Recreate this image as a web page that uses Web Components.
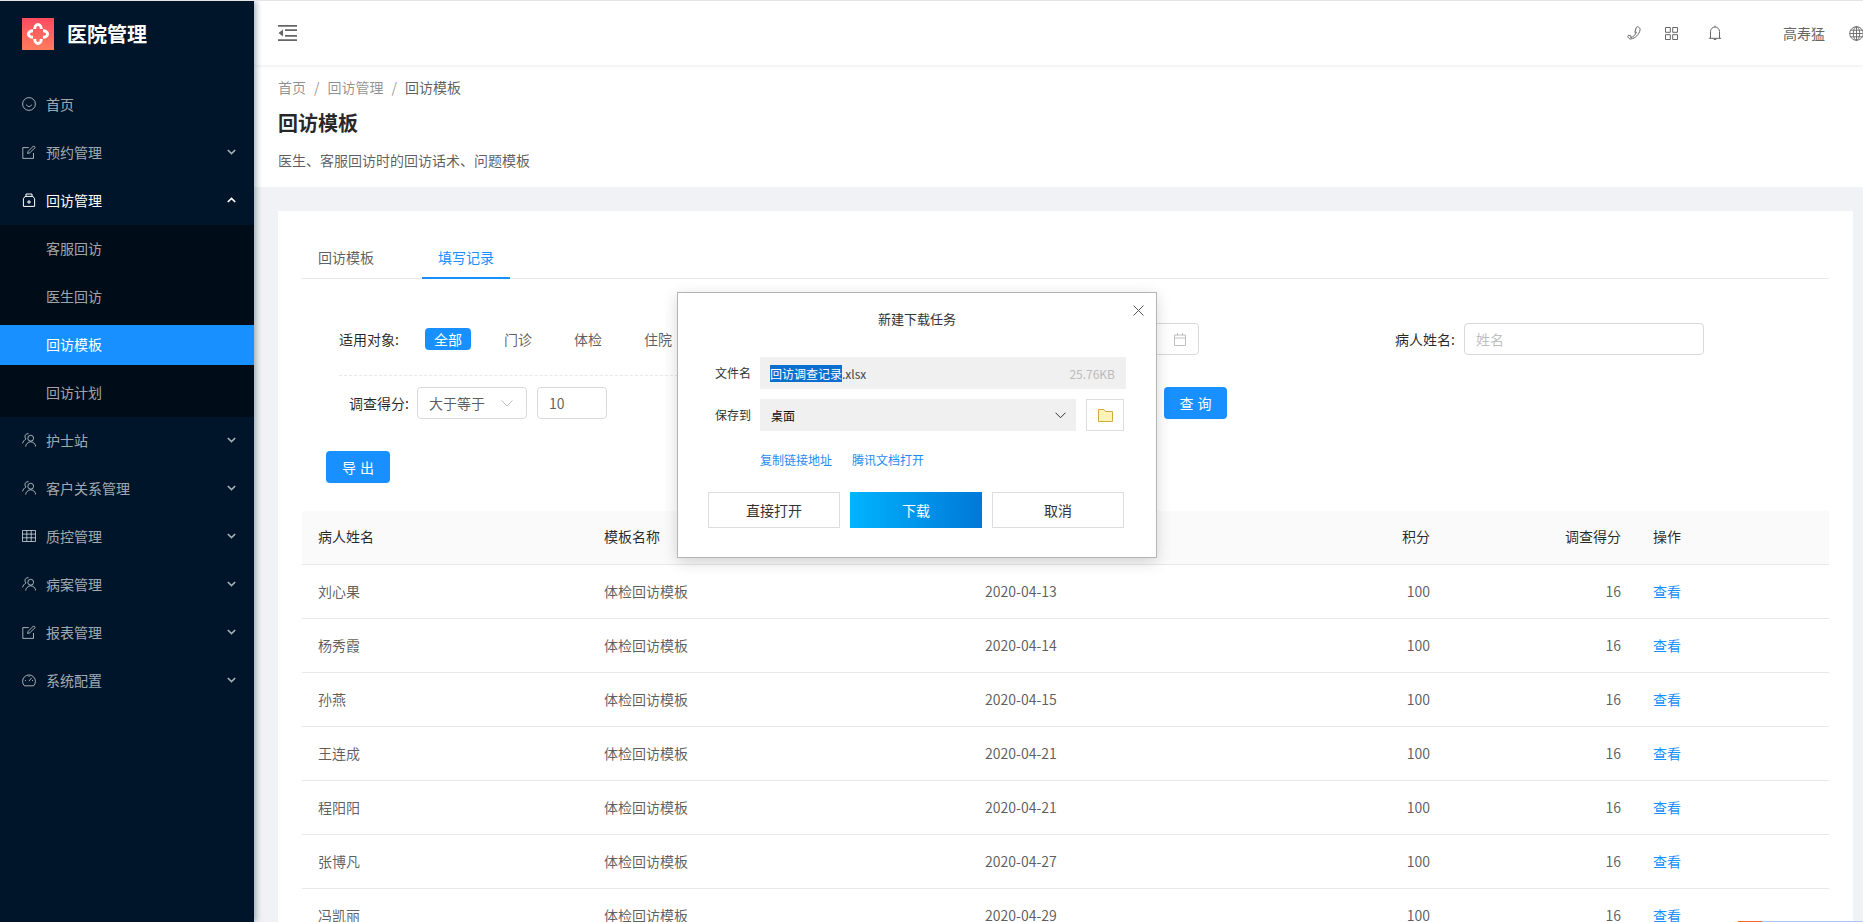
<!DOCTYPE html>
<html lang="zh-CN">
<head>
<meta charset="utf-8">
<title>回访模板</title>
<style>
  html, body { margin: 0; height: 100%; overflow: hidden; background: #f0f2f5; }
  body { font-family: "Noto Sans CJK SC", sans-serif; font-size: 14px; }
</style>
</head>
<body>
<app-shell>
  <side-nav slot="nav"></side-nav>
  <top-bar slot="top"></top-bar>
  <page-head slot="head" current="回访模板" desc="医生、客服回访时的回访话术、问题模板"></page-head>
  <record-panel slot="body"></record-panel>
</app-shell>
<download-dialog></download-dialog>
<task-strip></task-strip>

<script>
const icons = {
    smile: '<circle cx="7" cy="7" r="6.4"/><path d="M4.4 7.6c.6 1.4 1.5 2 2.6 2s2-.6 2.6-2"/>',
    form: '<path d="M11.5 8v5.4H.8V2.6h6"/><path d="M5.6 8.4l.5-2L11.6.9l1.6 1.6-5.5 5.4z"/>',
    medicine: '<path d="M3 3.4h8l1.6 2.4v7.6H1.4V5.8z"/><path d="M4 3.4V1h6v2.4"/><path d="M7 7v4M5 9h4"/>',
    team: '<circle cx="8.7" cy="5.2" r="2.9"/><path d="M3.6 13.6C4 11 6 8.8 8.7 8.8s4.700 2.200 5.100 4.800"/><path d="M6.600.7A3 3 0 0 0 4 5.900C2.400 6.900 1.200 8.400.5 10.400"/>',
    table: '<path d="M.5 1.500h13v11H.5zM.5 5.100h13M.5 8.800h13M4.800 1.500v11M9.200 1.500v11"/>',
    gauge: '<path d="M2.400 12.800a6.400 6.400 0 1 1 9.200 0z"/><path d="M7 8.200l2.600-3.400M3 7.600h1M10 7.600h1M7 3v1"/>',
};

function icon(name, size) {
    return `<svg width="${size}" height="${size}" viewBox="0 0 14 14" fill="none" stroke="currentColor" stroke-width="1">${icons[name]}</svg>`;
}

const shellTemplate = document.createElement('template');
shellTemplate.innerHTML = `
    <style>
        :host { display: flex; width: 1863px; height: 922px; overflow: hidden; box-sizing: border-box; border-top: 1px solid #e4e4e4; }
        .nav { flex: 0 0 254px; position: relative; z-index: 2; box-shadow: 2px 0 6px rgba(0, 21, 41, .35); }
        .main { flex: 1; min-width: 0; display: flex; flex-flow: column nowrap; }
    </style>
    <div class="nav"><slot name="nav"></slot></div>
    <div class="main">
        <slot name="top"></slot>
        <slot name="head"></slot>
        <slot name="body"></slot>
    </div>
`;

class AppShell extends HTMLElement {
    constructor() {
        super();
        this.attachShadow({ mode: 'open' }).appendChild(shellTemplate.content.cloneNode(true));
    }
}

const navTemplate = document.createElement('template');
navTemplate.innerHTML = `
    <style>
        :host { display: block; height: 100%; background: #001529; color: rgba(255, 255, 255, .65); font-size: 14px; }
        .brand { display: flex; align-items: center; height: 65px; padding-left: 22px; box-sizing: border-box; }
        .brand span { margin-left: 13px; color: #fff; font-size: 20px; font-weight: 700; line-height: 28px; }
        .list { padding-top: 15px; }
        .sub { background: #000c17; }
    </style>
    <div class="brand">
        <svg width="32" height="32" viewBox="0 0 32 32">
            <defs><linearGradient id="lg" x1="0" y1="0" x2="0" y2="1"><stop offset="0" stop-color="#ff4a62"/><stop offset="1" stop-color="#ff7d5c"/></linearGradient></defs>
            <rect width="32" height="32" fill="url(#lg)"/>
            <g fill="none" stroke="#fff" stroke-width="3">
                <path id="petal" d="M12.700 11C12.700 8.500 14.200 6.500 16 6.500s3.300 2 3.300 4.500"/>
                <use href="#petal" transform="rotate(90 16 16)"/>
                <use href="#petal" transform="rotate(180 16 16)"/>
                <use href="#petal" transform="rotate(270 16 16)"/>
            </g>
        </svg>
        <span>医院管理</span>
    </div>
    <div class="list"></div>
`;

const menu = [
    { text: '首页', icon: 'smile' },
    { text: '预约管理', icon: 'form', arrow: 'down' },
    { text: '回访管理', icon: 'medicine', arrow: 'up', open: true, children: ['客服回访', '医生回访', '回访模板', '回访计划'] },
    { text: '护士站', icon: 'team', arrow: 'down' },
    { text: '客户关系管理', icon: 'team', arrow: 'down' },
    { text: '质控管理', icon: 'table', arrow: 'down' },
    { text: '病案管理', icon: 'team', arrow: 'down' },
    { text: '报表管理', icon: 'form', arrow: 'down' },
    { text: '系统配置', icon: 'gauge', arrow: 'down' },
];

class SideNav extends HTMLElement {
    constructor() {
        super();
        this._shadowRoot = this.attachShadow({ mode: 'open' });
        this._shadowRoot.appendChild(navTemplate.content.cloneNode(true));
        this.$list = this._shadowRoot.querySelector('.list');
        menu.forEach((entry) => {
            const row = document.createElement('nav-row');
            row.setAttribute('text', entry.text);
            row.setAttribute('icon', entry.icon);
            if (entry.arrow) row.setAttribute('arrow', entry.arrow);
            if (entry.open) row.setAttribute('open', '');
            this.$list.appendChild(row);
            if (entry.children) {
                const sub = document.createElement('div');
                sub.className = 'sub';
                entry.children.forEach((text) => {
                    const child = document.createElement('nav-row');
                    child.setAttribute('text', text);
                    if (text === '回访模板') child.setAttribute('selected', '');
                    sub.appendChild(child);
                });
                this.$list.appendChild(sub);
            }
        });
    }
}

class NavRow extends HTMLElement {
    constructor() {
        super();
        this.attachShadow({ mode: 'open' });
    }

    connectedCallback() {
        const name = this.getAttribute('icon');
        const arrow = this.getAttribute('arrow');
        const rotate = arrow === 'up' ? 'transform:rotate(180deg);' : '';
        this.shadowRoot.innerHTML = `
            <style>
                :host { display: block; height: 48px; padding: 4px 0; box-sizing: border-box; }
                .row { display: flex; align-items: center; height: 40px; box-sizing: border-box; padding: 0 0 2px 22px; line-height: 22px; }
                .ico { flex: 0 0 24px; display: flex; }
                .txt { margin-left: ${name ? 0 : 24}px; }
                .arrow { margin-left: auto; margin-right: 18px; display: flex; }
                :host([open]) .row { color: #fff; }
                :host([selected]) .row { background: #1890ff; color: #fff; }
            </style>
            <div class="row">
                ${name ? `<span class="ico">${icon(name, 14)}</span>` : ''}
                <span class="txt">${this.getAttribute('text')}</span>
                ${arrow ? `<svg class="arrow" style="${rotate}" width="9" height="6" viewBox="0 0 9 6" fill="none" stroke="currentColor" stroke-width="1.700"><path d="M.8 1l3.700 3.500L8.200 1"/></svg>` : ''}
            </div>
        `;
    }
}

const topTemplate = document.createElement('template');
topTemplate.innerHTML = `
    <style>
        :host { display: flex; flex: 0 0 64px; align-items: center; background: #fff; color: #666; position: relative; z-index: 1; box-shadow: 0 1px 4px rgba(0, 21, 41, .08); font-size: 14px; }
        .fold { margin-left: 24px; display: flex; }
        .tools { margin-left: auto; display: flex; align-items: center; width: 236px; box-sizing: border-box; }
        .tools svg { display: block; flex: none; }
        .name { margin-left: 61px; line-height: 22px; white-space: nowrap; }
        .globe { margin-left: 24px; }
    </style>
    <svg class="fold" width="19" height="16" viewBox="0 0 19 16" fill="#666">
        <path d="M0 0h19v1.800H0zM0 14.200h19V16H0zM7 4.300h12v1.800H7zM7 9.900h12v1.800H7zM.5 8L5 4.500v7z"/>
    </svg>
    <div class="tools">
        <svg width="14" height="14" viewBox="0 0 14 14" fill="none" stroke="currentColor"><path d="M9.300 1.300l1.300-.6c1.700.6 2.700 1.700 2.500 3.100-.9 4.600-4.600 8.400-9.200 9.200-1.400.2-2.500-.8-3.100-2.500l.7-1.300 2.500.9-.3 1.600c2.500-.6 4.900-3 5.600-5.700l-1.500.3z"/></svg>
        <svg style="margin-left:24px" width="13" height="13" viewBox="0 0 13 13" fill="none" stroke="currentColor"><path d="M.5.500h4.800v4.800H.5zM7.700.500h4.800v4.800H7.700zM.5 7.700h4.800v4.800H.5zM7.700 7.700h4.800v4.800H7.700z"/></svg>
        <svg style="margin-left:30px" width="14" height="16" viewBox="0 0 14 16" fill="none" stroke="currentColor"><path d="M7 .5v1.300M2.500 13V6.500a4.500 4.500 0 0 1 9 0V13M.8 13.300h12.400M5.400 13.600c.2 1.400 3 1.400 3.200 0"/></svg>
        <span class="name">高寿猛</span>
        <svg class="globe" width="15" height="15" viewBox="0 0 15 15" fill="none" stroke="currentColor" stroke-width=".9" style="margin-right:-20px"><circle cx="7.500" cy="7.500" r="6.800"/><ellipse cx="7.500" cy="7.500" rx="3.200" ry="6.800"/><path d="M.7 7.500h13.600M1.500 4.200h12M1.500 10.800h12M7.500.7v13.600"/></svg>
    </div>
`;

class TopBar extends HTMLElement {
    constructor() {
        super();
        this.attachShadow({ mode: 'open' }).appendChild(topTemplate.content.cloneNode(true));
    }
}

class PageHead extends HTMLElement {
    constructor() {
        super();
        this.attachShadow({ mode: 'open' });
    }

    connectedCallback() {
        const current = this.getAttribute('current');
        this.shadowRoot.innerHTML = `
            <style>
                :host { display: block; flex: 0 0 122px; box-sizing: border-box; padding: 11px 24px 0; background: #fff; }
                .crumb { height: 22px; line-height: 22px; color: rgba(0, 0, 0, .45); font-size: 14px; }
                .crumb i { font-style: normal; padding: 0 8px; }
                .crumb b { font-weight: 400; color: rgba(0, 0, 0, .65); }
                h1 { margin: 11px 0 0; font-size: 20px; line-height: 28px; font-weight: 600; color: rgba(0, 0, 0, .85); }
                p { margin: 12px 0 0; font-size: 14px; line-height: 22px; color: rgba(0, 0, 0, .65); }
            </style>
            <div class="crumb">首页<i>/</i>回访管理<i>/</i><b>${current}</b></div>
            <h1>${current}</h1>
            <p>${this.getAttribute('desc')}</p>
        `;
    }
}

const panelTemplate = document.createElement('template');
panelTemplate.innerHTML = `
    <style>
        :host { display: block; margin: 24px 10px 0 24px; padding: 24px 24px 0; background: #fff; color: rgba(0, 0, 0, .65); font-size: 14px; flex: 1; min-height: 0; }
        .tabs { display: flex; height: 43px; border-bottom: 1px solid #e8e8e8; box-sizing: content-box; }
        .tab { padding: 11px 16px 0; line-height: 22px; box-sizing: border-box; width: 88px; margin-right: 32px; height: 45px; }
        .tab.on { color: #1890ff; border-bottom: 2px solid #1890ff; height: 44px; margin-right: 0; }
        .line-one { display: flex; align-items: center; height: 32px; margin-top: 44px; padding-left: 37px; }
        .label { width: 61px; flex: none; color: rgba(0, 0, 0, .85); line-height: 22px; white-space: nowrap; }
        .tag { display: inline-block; width: 46px; height: 22px; line-height: 22px; margin-left: 25px; border-radius: 4px; background: #1890ff; color: #fff; text-align: center; }
        .plain { margin-left: 33px; width: 37px; }
        .box { display: flex; align-items: center; box-sizing: border-box; height: 32px; border: 1px solid #d9d9d9; border-radius: 4px; padding: 0 11px; }
        .range { margin-left: auto; width: 300px; justify-content: flex-end; padding-right: 12px; }
        .name-label { margin-left: 196px; }
        .name-box { width: 240px; margin-left: 8px; margin-right: 125px; color: #bfbfbf; }
        .dash { width: 700px; height: 0; border-top: 1px dashed #e8e8e8; margin: 20px 0 11px 37px; }
        .line-two { display: flex; align-items: center; height: 32px; padding-left: 47px; }
        .select { width: 110px; margin-left: 7px; justify-content: space-between; padding-right: 13px; }
        .num { width: 70px; margin-left: 10px; }
        .primary { display: flex; align-items: center; justify-content: center; height: 32px; border-radius: 4px; background: #1890ff; color: #fff; box-shadow: 0 2px 0 rgba(0, 0, 0, .015); letter-spacing: 4px; }
        .query { width: 63px; margin-left: 557px; padding-left: 4px; box-sizing: border-box; }
        .export { width: 64px; margin: 32px 0 28px 24px; padding-left: 4px; box-sizing: border-box; }
    </style>
    <div class="tabs">
        <div class="tab">回访模板</div>
        <div class="tab on">填写记录</div>
    </div>
    <div class="line-one">
        <span class="label">适用对象:</span>
        <span class="tag">全部</span>
        <span class="plain">门诊</span>
        <span class="plain">体检</span>
        <span class="plain">住院</span>
        <span class="box range">
            <svg width="12" height="13" viewBox="0 0 12 13" fill="none" stroke="#bfbfbf"><path d="M.5 2h11v10.500H.5zM.5 5h11M3.500 0v2.500M8.500 0v2.500"/></svg>
        </span>
        <span class="label name-label">病人姓名:</span>
        <span class="box name-box">姓名</span>
    </div>
    <div class="dash"></div>
    <div class="line-two">
        <span class="label">调查得分:</span>
        <span class="box select">大于等于
            <svg width="12" height="7" viewBox="0 0 12 7" fill="none" stroke="#bfbfbf"><path d="M.5.500L6 6l5.500-5.500"/></svg>
        </span>
        <span class="box num">10</span>
        <span class="primary query">查询</span>
    </div>
    <div class="primary export">导出</div>
    <record-table></record-table>
`;

class RecordPanel extends HTMLElement {
    constructor() {
        super();
        this.attachShadow({ mode: 'open' }).appendChild(panelTemplate.content.cloneNode(true));
    }
}

const rows = [
    ['刘心果', '2020-04-13'],
    ['杨秀霞', '2020-04-14'],
    ['孙燕', '2020-04-15'],
    ['王连成', '2020-04-21'],
    ['程阳阳', '2020-04-21'],
    ['张博凡', '2020-04-27'],
    ['冯凯丽', '2020-04-29'],
];

class RecordTable extends HTMLElement {
    constructor() {
        super();
        const body = rows.map(([name, date]) => `
            <tr>
                <td>${name}</td><td>体检回访模板</td><td>${date}</td>
                <td class="r">100</td><td class="r">16</td><td><a>查看</a></td>
            </tr>`).join('');
        this.attachShadow({ mode: 'open' }).innerHTML = `
            <style>
                :host { display: block; }
                table { width: 1527px; border-collapse: collapse; table-layout: fixed; font-size: 14px; }
                th { height: 53px; background: #fafafa; font-weight: 400; color: rgba(0, 0, 0, .85); text-align: left; padding: 0 16px 2px; box-sizing: border-box; border-bottom: 1px solid #e8e8e8; }
                td { height: 53px; padding: 0 16px; border-bottom: 1px solid #e8e8e8; color: rgba(0, 0, 0, .65); }
                .r { text-align: right; }
                a { color: #1890ff; }
            </style>
            <table>
                <colgroup><col style="width:286px"><col style="width:381px"><col style="width:281px"><col style="width:196px"><col style="width:191px"><col style="width:192px"></colgroup>
                <thead><tr><th>病人姓名</th><th>模板名称</th><th>填写时间</th><th class="r">积分</th><th class="r">调查得分</th><th>操作</th></tr></thead>
                <tbody>${body}</tbody>
            </table>
        `;
    }
}

const dialogTemplate = document.createElement('template');
dialogTemplate.innerHTML = `
    <style>
        :host { position: absolute; left: 677px; top: 292px; width: 480px; height: 266px; box-sizing: border-box; z-index: 5; background: #fff; border: 1px solid #b4b4b4; box-shadow: 0 4px 14px rgba(0, 0, 0, .16); font-size: 12px; color: #333; display: flex; flex-flow: column nowrap; padding: 0 30px 0 37px; }
        .title { position: relative; height: 64px; line-height: 52px; font-size: 13px; text-align: center; margin-right: 7px; }
        .close { position: absolute; right: -25px; top: 12px; }
        .row { display: flex; align-items: center; height: 32px; margin-bottom: 10px; }
        .row > label { width: 45px; flex: none; line-height: 18px; }
        .field { display: flex; align-items: center; background: #f0f0f0; height: 32px; padding: 0 10px; box-sizing: border-box; }
        .file { width: 367px; padding-right: 11px; }
        .sel { background: #0a6fcf; color: #fff; line-height: 17px; }
        .ext { color: #444; }
        .size { margin-left: auto; color: #bbb; }
        .dest { width: 316px; padding-left: 11px; justify-content: space-between; color: #111; padding-right: 10px; }
        .folder { width: 38px; height: 32px; box-sizing: border-box; margin-left: 10px; border: 1px solid #ddd; display: flex; align-items: center; justify-content: center; }
        .links { display: flex; gap: 20px; margin: 8px 0 0 45px; height: 22px; line-height: 22px; color: #1e8bf5; }
        .buttons { display: flex; gap: 10px; margin: 21px 0 0 -7px; }
        .buttons div { width: 132px; height: 36px; box-sizing: border-box; border: 1px solid #ddd; line-height: 34px; text-align: center; font-size: 14px; color: #333; }
        .buttons .go { border: 0; line-height: 36px; color: #fff; background: linear-gradient(90deg, #00b4ff, #0078d7); }
    </style>
    <div class="title">新建下载任务
        <svg class="close" width="11" height="11" viewBox="0 0 11 11" fill="none" stroke="#555"><path d="M.5.500l10 10M10.500.500l-10 10"/></svg>
    </div>
    <div class="row"><label>文件名</label>
        <div class="field file"><span class="sel">回访调查记录</span><span class="ext">.xlsx</span><span class="size">25.76KB</span></div>
    </div>
    <div class="row"><label>保存到</label>
        <div class="field dest">桌面
            <svg width="11" height="7" viewBox="0 0 11 7" fill="none" stroke="#333"><path d="M.5.700l5 5 5-5"/></svg>
        </div>
        <div class="folder">
            <svg width="15" height="13" viewBox="0 0 15 13"><path d="M.5.500h5.500l1.500 2h7v10H.5z" fill="#fff3b8" stroke="#d2a843"/></svg>
        </div>
    </div>
    <div class="links"><span>复制链接地址</span><span>腾讯文档打开</span></div>
    <div class="buttons"><div>直接打开</div><div class="go">下载</div><div>取消</div></div>
`;

class DownloadDialog extends HTMLElement {
    constructor() {
        super();
        this.attachShadow({ mode: 'open' }).appendChild(dialogTemplate.content.cloneNode(true));
    }
}

// sliver of the taskbar along the bottom of the window
class TaskStrip extends HTMLElement {
    constructor() {
        super();
        this.attachShadow({ mode: 'open' }).innerHTML = `
            <style>
                :host { position: absolute; left: 1738px; top: 921px; width: 125px; height: 1px; display: flex; z-index: 6; }
                i { display: block; height: 1px; }
            </style>
            <i style="width:24px;background:#f2682a"></i><i style="flex:1;background:#a9c8f5"></i>
        `;
    }
}

customElements.define('app-shell', AppShell);
customElements.define('side-nav', SideNav);
customElements.define('nav-row', NavRow);
customElements.define('top-bar', TopBar);
customElements.define('page-head', PageHead);
customElements.define('record-panel', RecordPanel);
customElements.define('record-table', RecordTable);
customElements.define('download-dialog', DownloadDialog);
customElements.define('task-strip', TaskStrip);
</script>
</body>
</html>
